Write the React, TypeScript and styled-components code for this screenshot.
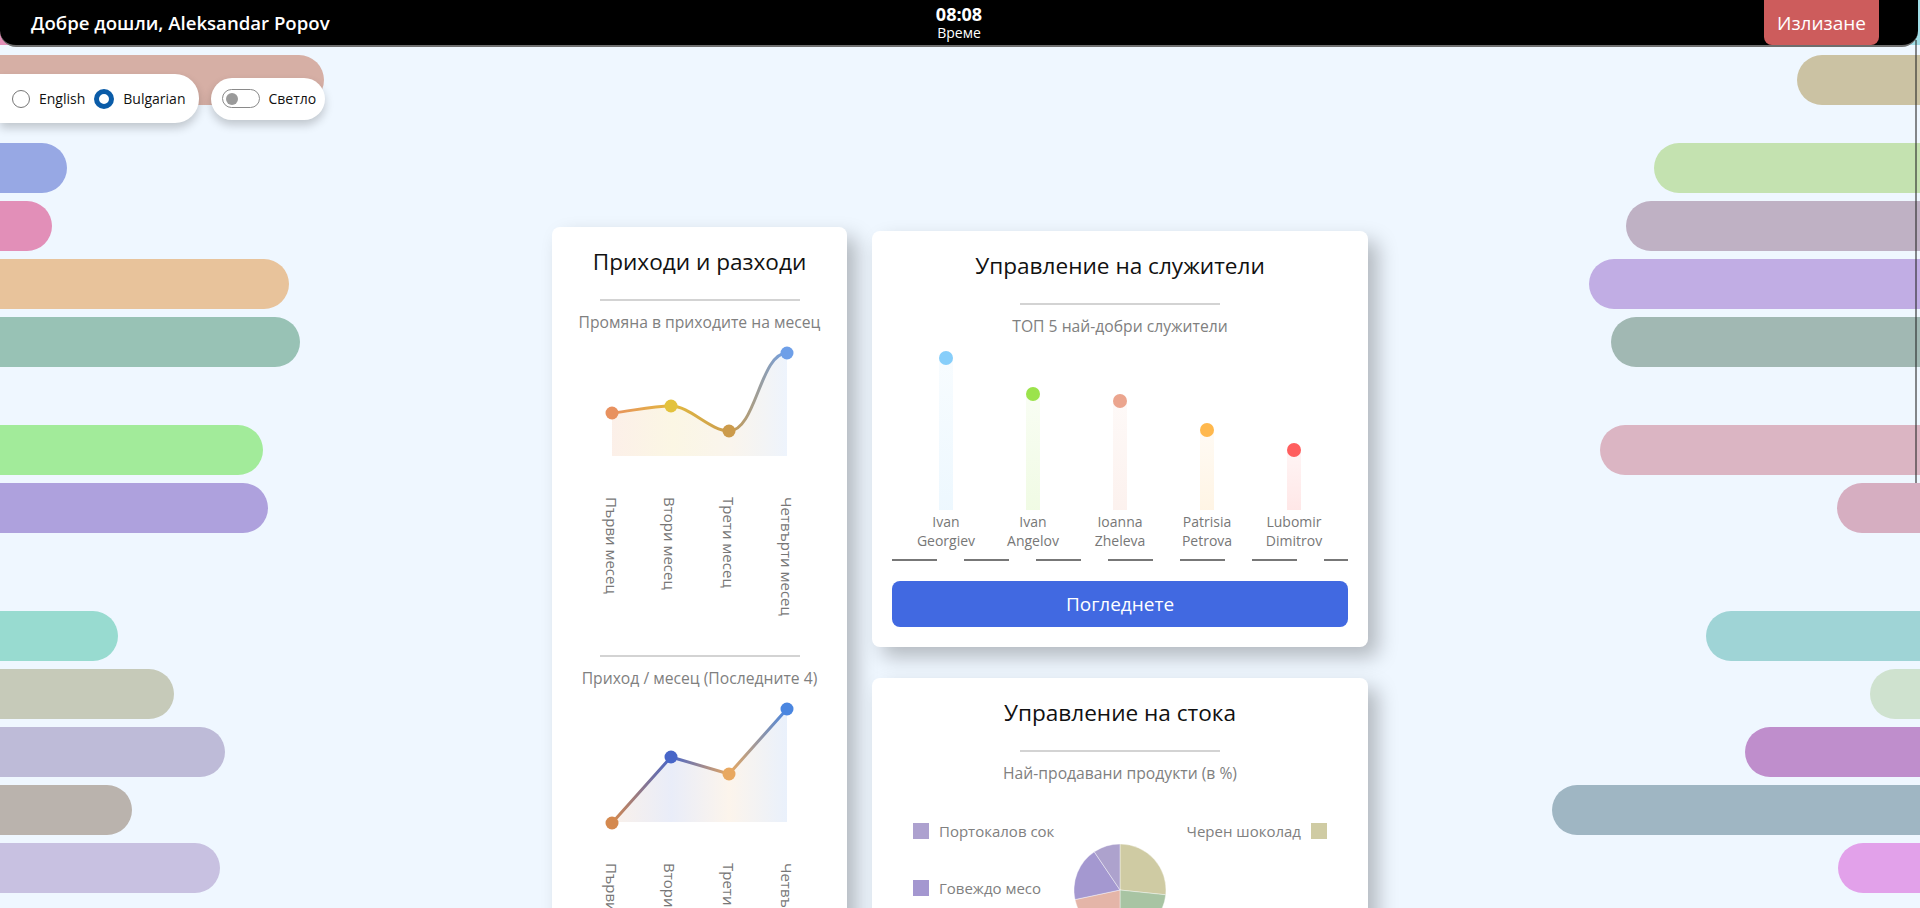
import React from "react";
import styled, { createGlobalStyle } from "styled-components";

const GlobalStyle = createGlobalStyle`
  html, body { margin: 0; padding: 0; }
  body {
    background: #eff7ff;
    font-family: "Open Sans", "Noto Sans", sans-serif;
    overflow: hidden;
  }
  * { box-sizing: border-box; }
`;

const Page = styled.div`
  position: relative;
  width: 100%;
  height: 100vh;
  overflow: hidden;
  background: #eff7ff;
`;

/* ---------- decorative background bars ---------- */
const BarsLayer = styled.div`
  position: absolute;
  inset: 0;
  z-index: 0;
  display: flex;
  flex-direction: column;
  pointer-events: none;
`;

const BarRow = styled.div<{ $gap: number }>`
  flex-shrink: 0;
  display: flex;
  justify-content: space-between;
  height: 50px;
  margin-top: ${(p) => p.$gap}px;
`;

const Bar = styled.div<{ $w: number; $c: string; $side: "left" | "right" }>`
  width: ${(p) => p.$w}px;
  height: 100%;
  background: ${(p) => p.$c};
  border-radius: ${(p) => (p.$side === "left" ? "0 25px 25px 0" : "25px 0 0 25px")};
`;

const ScrollLine = styled.div`
  position: absolute;
  top: 40px;
  right: 3px;
  width: 2px;
  height: 443px;
  background: rgba(40, 40, 40, 0.55);
  z-index: 1;
`;

const bars: [number, number, string, number, string][] = [
  [-5, 120, "#e28fb7", 70, "#a0dde6"],
  [10, 324, "#d6afa5", 123, "#cbc2a3"],
  [38, 67, "#97a8e4", 266, "#c4e2b0"],
  [8, 52, "#e28fb8", 294, "#bfb1c4"],
  [8, 289, "#e8c39b", 331, "#c1ade4"],
  [8, 300, "#98c2b5", 309, "#a1b8b3"],
  [58, 263, "#a2eb9a", 320, "#dbb5c3"],
  [8, 268, "#aea1dd", 83, "#d6aec1"],
  [78, 118, "#98dbd0", 214, "#9fd4d6"],
  [8, 174, "#c6cab9", 50, "#cfe2cf"],
  [8, 225, "#bebbd8", 175, "#bf8ecc"],
  [8, 132, "#bab3ad", 368, "#9fb6c3"],
  [8, 220, "#c8c1e1", 82, "#e2a1ea"],
];

/* ---------- header ---------- */
const Header = styled.header`
  position: relative;
  z-index: 3;
  width: calc(100% - 2px);
  height: 47px;
  background: #000;
  border-bottom: 2px solid #6e6e6e;
  border-radius: 0 0 16px 16px;
  display: grid;
  grid-template-columns: 1fr auto 1fr;
  align-items: center;
  overflow: hidden;
`;

const Welcome = styled.h1`
  margin: 0;
  padding-left: 31px;
  color: #fff;
  font-size: 18.6px;
  font-weight: 600;
  white-space: nowrap;
`;

const Clock = styled.div`
  display: flex;
  flex-direction: column;
  align-items: center;
  color: #fff;
`;

const ClockTime = styled.span`
  font-size: 18px;
  font-weight: 700;
  line-height: 19px;
`;

const ClockLabel = styled.span`
  font-size: 14px;
  line-height: 16px;
  margin-top: 1px;
`;

const LogoutButton = styled.button`
  justify-self: end;
  align-self: start;
  margin-right: 39px;
  width: 115px;
  height: 45px;
  border: none;
  border-radius: 0 0 8px 8px;
  background: #cd5c5c;
  color: #fff;
  font-family: inherit;
  font-size: 19px;
`;

/* ---------- controls ---------- */
const Controls = styled.div`
  position: relative;
  z-index: 2;
  display: flex;
  align-items: center;
  gap: 12px;
  margin-top: 27px;
`;

const LangPanel = styled.div`
  display: flex;
  align-items: center;
  height: 49px;
  padding: 0 14px 0 12px;
  background: #fff;
  border-radius: 0 24px 24px 0;
  box-shadow: 0 5px 10px rgba(0, 0, 0, 0.2);
`;

const RadioLabel = styled.label`
  display: flex;
  align-items: center;
  gap: 9px;
  margin-right: 9px;
  font-size: 14px;
  color: #111;
  &:last-child { margin-right: 0; }
`;

const Radio = styled.input`
  appearance: none;
  margin: 0;
  width: 18px;
  height: 18px;
  border-radius: 50%;
  border: 1px solid #767676;
  background: #fff;
  &:checked {
    width: 20px;
    height: 20px;
    border: 5px solid #0a5ca8;
  }
`;

const ThemePanel = styled.div`
  display: flex;
  align-items: center;
  gap: 8px;
  height: 42px;
  padding: 0 9px 0 11px;
  background: #fff;
  border-radius: 21px;
  box-shadow: 0 5px 10px rgba(0, 0, 0, 0.2);
  font-size: 14px;
  color: #111;
`;

const Switch = styled.span`
  position: relative;
  display: inline-block;
  width: 38px;
  height: 19px;
  border: 1px solid #8a8a8a;
  border-radius: 10px;
  background: #fff;
  &::after {
    content: "";
    position: absolute;
    left: 3px;
    top: 2.5px;
    width: 12px;
    height: 12px;
    border-radius: 50%;
    background: #9a9a9a;
  }
`;

/* ---------- cards ---------- */
const CardsRow = styled.main`
  position: relative;
  z-index: 2;
  display: flex;
  justify-content: center;
  align-items: flex-start;
  gap: 25px;
  margin-top: 104px;
`;

const Column = styled.div`
  display: flex;
  flex-direction: column;
  gap: 31px;
  margin-top: 4px;
`;

const Card = styled.section<{ $w: number; $minH?: number }>`
  width: ${(p) => p.$w}px;
  min-height: ${(p) => (p.$minH ? `${p.$minH}px` : "auto")};
  background: #fff;
  border-radius: 8px;
  box-shadow: 10px 10px 20px rgba(0, 0, 0, 0.25);
  padding: 20px 0;
  display: flex;
  flex-direction: column;
  align-items: center;
`;

const CardTitle = styled.h2`
  margin: 0;
  font-size: 22.6px;
  font-weight: 400;
  line-height: 29px;
  color: #111;
`;

const Divider = styled.hr<{ $mt: number }>`
  width: 200px;
  height: 2px;
  margin: ${(p) => p.$mt}px 0 0;
  border: none;
  background: #d3d3d3;
`;

const Subtitle = styled.p`
  margin: 10px 0 0;
  font-size: 15.7px;
  line-height: 22px;
  color: #808080;
`;

const ChartSvg = styled.svg`
  display: block;
`;

const AxisLabels = styled.div<{ $h: number }>`
  display: grid;
  grid-template-columns: repeat(4, 58.5px);
  justify-content: center;
  width: 100%;
  height: ${(p) => p.$h}px;
`;

const AxisLabel = styled.span`
  justify-self: center;
  writing-mode: vertical-rl;
  font-size: 15px;
  line-height: 20px;
  color: #777;
  white-space: nowrap;
`;

/* lollipop */
const Lollipops = styled.div`
  display: grid;
  grid-template-columns: repeat(5, 87px);
  justify-content: center;
  width: 100%;
`;

const LolliCol = styled.div`
  display: flex;
  flex-direction: column;
  align-items: center;
`;

const StickArea = styled.div`
  height: 173px;
  display: flex;
  align-items: flex-end;
`;

const Stick = styled.div<{ $h: number; $c: string }>`
  position: relative;
  width: 14px;
  height: ${(p) => p.$h}px;
  background: linear-gradient(
    to bottom,
    ${(p) => p.$c}10,
    ${(p) => p.$c}26
  );
`;

const Dot = styled.span<{ $c: string }>`
  position: absolute;
  left: 0;
  top: -7px;
  width: 14px;
  height: 14px;
  border-radius: 50%;
  background: ${(p) => p.$c};
`;

const EmpName = styled.div`
  margin-top: 2px;
  font-size: 14px;
  line-height: 19px;
  color: #777;
  text-align: center;
`;

const DashLine = styled.div`
  align-self: stretch;
  margin: 9px 20px 0;
  height: 2px;
  background-image: linear-gradient(to right, #777 45px, transparent 45px);
  background-size: 72px 2px;
`;

const ViewButton = styled.button`
  align-self: stretch;
  margin: 20px 20px 0;
  height: 46px;
  border: none;
  border-radius: 8px;
  background: #4169e1;
  color: #fff;
  font-family: inherit;
  font-size: 19px;
`;

/* stock */
const LegendGrid = styled.div`
  display: grid;
  grid-template-columns: 1fr 92px 1fr;
  align-items: start;
  width: 100%;
  padding: 0 41px;
  margin-top: 36px;
`;

const LegendCol = styled.div<{ $end?: boolean }>`
  display: flex;
  flex-direction: column;
  align-items: ${(p) => (p.$end ? "flex-end" : "flex-start")};
  gap: 35px;
`;

const LegendItem = styled.div`
  display: flex;
  align-items: center;
  gap: 10px;
  font-size: 15px;
  line-height: 22px;
  color: #808080;
  white-space: nowrap;
`;

const Swatch = styled.span<{ $c: string }>`
  width: 16px;
  height: 16px;
  background: ${(p) => p.$c};
`;

const PieSvg = styled.svg`
  display: block;
  margin-top: 24px;
`;

/* ---------- data ---------- */
const employees = [
  { first: "Ivan", last: "Georgiev", h: 152, c: "#87cefa" },
  { first: "Ivan", last: "Angelov", h: 116, c: "#9be34b" },
  { first: "Ioanna", last: "Zheleva", h: 109, c: "#eba58e" },
  { first: "Patrisia", last: "Petrova", h: 80, c: "#ffb84d" },
  { first: "Lubomir", last: "Dimitrov", h: 60, c: "#ff5e5e" },
];

const months = ["Първи месец", "Втори месец", "Трети месец", "Четвърти месец"];
const xs = [60, 119, 177, 235];

function slice(cx: number, cy: number, r: number, a0: number, a1: number) {
  const rad = (a: number) => ((a - 90) * Math.PI) / 180;
  const x0 = cx + r * Math.cos(rad(a0));
  const y0 = cy + r * Math.sin(rad(a0));
  const x1 = cx + r * Math.cos(rad(a1));
  const y1 = cy + r * Math.sin(rad(a1));
  const large = a1 - a0 > 180 ? 1 : 0;
  return `M${cx},${cy} L${x0},${y0} A${r},${r} 0 ${large} 1 ${x1},${y1} Z`;
}

const pie = [
  { a0: 0, a1: 96, c: "#cfcba3" },
  { a0: 96, a1: 180, c: "#a8c4a3" },
  { a0: 180, a1: 258, c: "#e4b5a8" },
  { a0: 258, a1: 326, c: "#a498d0" },
  { a0: 326, a1: 360, c: "#ada2cd" },
];

function IncomeChangeChart() {
  const ys = [80, 73, 98, 20];
  const colors = ["#e8915f", "#e3c23d", "#cc9b4b", "#6e9fe8"];
  const line =
    `M60,80 C80,78 99,73 119,73 C138,73 158,98 177,98 C204,98 208,20 235,20`;
  const area = `${line} L235,123 L60,123 Z`;
  return (
    <ChartSvg width={295} height={164} viewBox="0 0 295 164">
      <defs>
        <linearGradient id="l1" gradientUnits="userSpaceOnUse" x1="60" x2="235" y1="0" y2="0">
          <stop offset="0" stopColor="#e8915f" />
          <stop offset="0.35" stopColor="#e2b83f" />
          <stop offset="0.68" stopColor="#c99c50" />
          <stop offset="1" stopColor="#6e9fe8" />
        </linearGradient>
        <linearGradient id="a1" gradientUnits="userSpaceOnUse" x1="60" x2="235" y1="0" y2="0">
          <stop offset="0" stopColor="#e8915f" stopOpacity="0.14" />
          <stop offset="0.35" stopColor="#e3c23d" stopOpacity="0.14" />
          <stop offset="0.68" stopColor="#cc9b4b" stopOpacity="0.1" />
          <stop offset="1" stopColor="#6e9fe8" stopOpacity="0.12" />
        </linearGradient>
      </defs>
      <path d={area} fill="url(#a1)" />
      <path d={line} fill="none" stroke="url(#l1)" strokeWidth={3} />
      {xs.map((x, i) => (
        <circle key={i} cx={x} cy={ys[i]} r={6.5} fill={colors[i]} />
      ))}
    </ChartSvg>
  );
}

function IncomeChart() {
  const ys = [134, 68, 85, 20];
  const colors = ["#d4894f", "#4866c8", "#e8a860", "#4a86e0"];
  const pts = xs.map((x, i) => `${x},${ys[i]}`).join(" L");
  const line = `M${pts}`;
  const area = `${line} L235,133 L60,133 Z`;
  return (
    <ChartSvg width={295} height={174} viewBox="0 0 295 174">
      <defs>
        <linearGradient id="l2" gradientUnits="userSpaceOnUse" x1="60" x2="235" y1="0" y2="0">
          <stop offset="0" stopColor="#d4894f" />
          <stop offset="0.34" stopColor="#4866c8" />
          <stop offset="0.67" stopColor="#e8a860" />
          <stop offset="1" stopColor="#4a86e0" />
        </linearGradient>
        <linearGradient id="a2" gradientUnits="userSpaceOnUse" x1="60" x2="235" y1="0" y2="0">
          <stop offset="0" stopColor="#d4894f" stopOpacity="0.12" />
          <stop offset="0.34" stopColor="#4866c8" stopOpacity="0.12" />
          <stop offset="0.67" stopColor="#e8a860" stopOpacity="0.12" />
          <stop offset="1" stopColor="#4a86e0" stopOpacity="0.12" />
        </linearGradient>
      </defs>
      <path d={area} fill="url(#a2)" />
      <path d={line} fill="none" stroke="url(#l2)" strokeWidth={3} />
      {xs.map((x, i) => (
        <circle key={i} cx={x} cy={ys[i]} r={6.5} fill={colors[i]} />
      ))}
    </ChartSvg>
  );
}

export default function App() {
  return (
    <Page>
      <GlobalStyle />
      <BarsLayer>
        {bars.map(([gap, lw, lc, rw, rc], i) => (
          <BarRow key={i} $gap={gap}>
            <Bar $w={lw} $c={lc} $side="left" />
            <Bar $w={rw} $c={rc} $side="right" />
          </BarRow>
        ))}
      </BarsLayer>
      <ScrollLine />

      <Header>
        <Welcome>Добре дошли, Aleksandar Popov</Welcome>
        <Clock>
          <ClockTime>08:08</ClockTime>
          <ClockLabel>Време</ClockLabel>
        </Clock>
        <LogoutButton>Излизане</LogoutButton>
      </Header>

      <Controls>
        <LangPanel>
          <RadioLabel>
            <Radio type="radio" name="lang" readOnly />
            English
          </RadioLabel>
          <RadioLabel>
            <Radio type="radio" name="lang" checked readOnly />
            Bulgarian
          </RadioLabel>
        </LangPanel>
        <ThemePanel>
          <Switch />
          Светло
        </ThemePanel>
      </Controls>

      <CardsRow>
        <Card $w={295} $minH={800}>
          <CardTitle>Приходи и разходи</CardTitle>
          <Divider $mt={23} />
          <Subtitle>Промяна в приходите на месец</Subtitle>
          <IncomeChangeChart />
          <AxisLabels $h={116}>
            {months.map((m) => (
              <AxisLabel key={m}>{m}</AxisLabel>
            ))}
          </AxisLabels>
          <Divider $mt={42} />
          <Subtitle>Приход / месец (Последните 4)</Subtitle>
          <IncomeChart />
          <AxisLabels $h={116}>
            {months.map((m) => (
              <AxisLabel key={m}>{m}</AxisLabel>
            ))}
          </AxisLabels>
        </Card>

        <Column>
          <Card $w={496}>
            <CardTitle>Управление на служители</CardTitle>
            <Divider $mt={23} />
            <Subtitle>ТОП 5 най-добри служители</Subtitle>
            <Lollipops>
              {employees.map((e) => (
                <LolliCol key={e.last}>
                  <StickArea>
                    <Stick $h={e.h} $c={e.c}>
                      <Dot $c={e.c} />
                    </Stick>
                  </StickArea>
                  <EmpName>
                    {e.first}
                    <br />
                    {e.last}
                  </EmpName>
                </LolliCol>
              ))}
            </Lollipops>
            <DashLine />
            <ViewButton>Погледнете</ViewButton>
          </Card>

          <Card $w={496} $minH={320}>
            <CardTitle>Управление на стока</CardTitle>
            <Divider $mt={23} />
            <Subtitle>Най-продавани продукти (в %)</Subtitle>
            <LegendGrid>
              <LegendCol>
                <LegendItem>
                  <Swatch $c="#ada1cf" />
                  Портокалов сок
                </LegendItem>
                <LegendItem>
                  <Swatch $c="#a497d0" />
                  Говеждо месо
                </LegendItem>
              </LegendCol>
              <PieSvg width={92} height={92} viewBox="0 0 92 92">
                {pie.map((s, i) => (
                  <path
                    key={i}
                    d={slice(46, 46, 46, s.a0, s.a1)}
                    fill={s.c}
                    stroke="#ffffff"
                    strokeOpacity={0.5}
                    strokeWidth={0.8}
                  />
                ))}
              </PieSvg>
              <LegendCol $end>
                <LegendItem>
                  Черен шоколад
                  <Swatch $c="#cfcba3" />
                </LegendItem>
              </LegendCol>
            </LegendGrid>
          </Card>
        </Column>
      </CardsRow>
    </Page>
  );
}
